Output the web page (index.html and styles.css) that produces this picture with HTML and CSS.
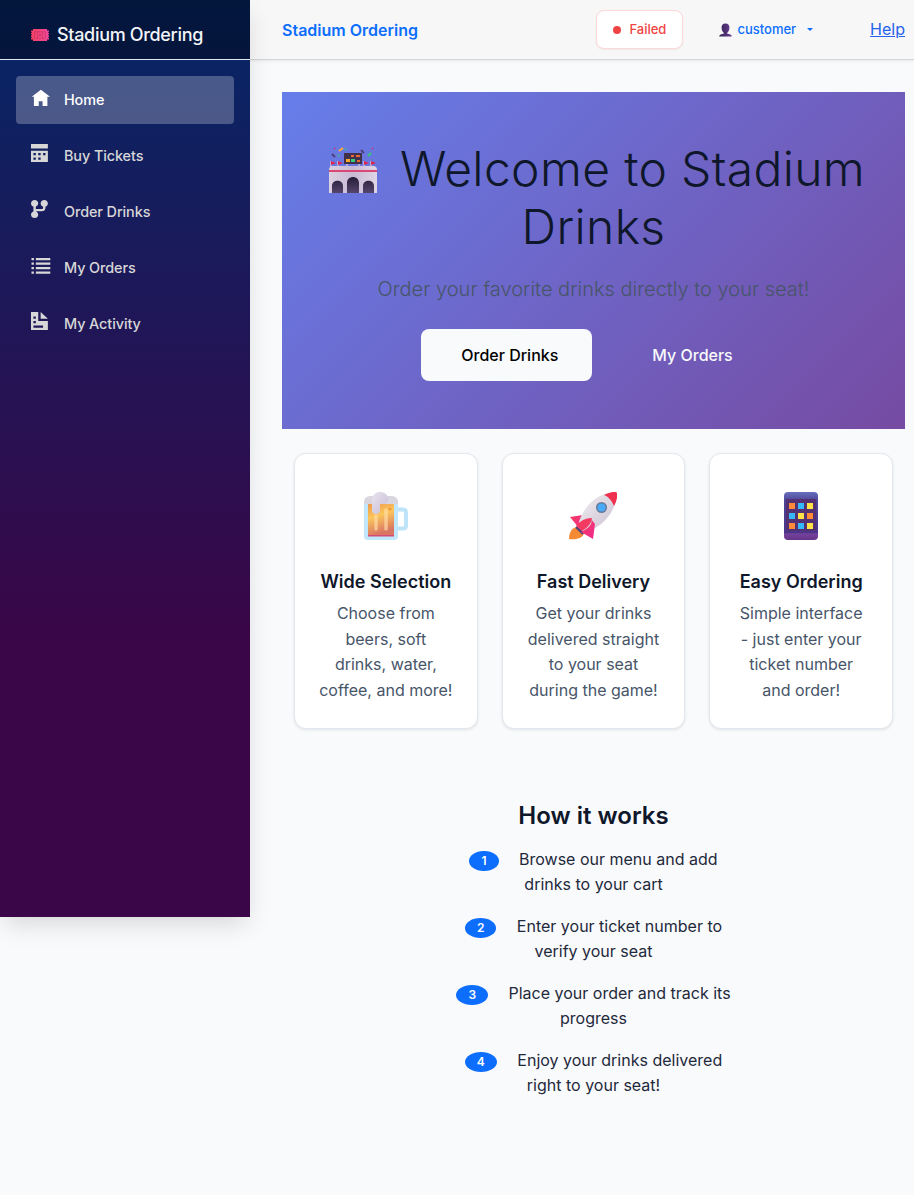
FILE: index.html
```html
<!DOCTYPE html>
<html lang="en">
<head>
<meta charset="utf-8">
<title>Stadium Ordering</title>
<link rel="stylesheet" href="styles.css">
</head>
<body>
<div class="page">
  <aside class="sidebar">
    <div class="brand">
      <svg class="ticket" viewBox="0 0 18 12"><defs><linearGradient id="tk"><stop stop-color="#f5415f"/><stop offset="1" stop-color="#f0479b"/></linearGradient></defs><path d="M2 0h14v1.500h2v1.200h-.7v1.200h.7v1.400h-.7v1.200h.7v1.400h-.7v1.200h.7v1.400h-2V12H2v-1.500H0V9.100h.7V7.900H0V6.500h.7V5.300H0V3.900h.7V2.700H0V1.500h2z" fill="url(#tk)"/><path d="M3.500 2.800h11v6.500h-11zM6.500 3v6M11.500 3v6" fill="none" stroke="#c9356b" stroke-width=".7"/><path d="M8.300 5.200h1.400v1.600H8.300z" fill="#a92d62"/></svg>
      <span>Stadium Ordering</span>
    </div>
    <nav class="nav">
      <a class="nav-link active"><svg class="ico" viewBox="0 0 8 8" preserveAspectRatio="none"><path d="M4.100.8L.3 3.900h.9V8h2V5.900h1.600V8h2V3.900h1.100z"/></svg>Home</a>
      <a class="nav-link"><svg class="ico" viewBox="0 0 8 8" preserveAspectRatio="none"><path d="M0 0v2h7V0zm0 3v5h7V3zm1 1h1v1H1zm2 0h1v1H3zm2 0h1v1H5zM1 6h1v1H1zm2 0h1v1H3z"/></svg>Buy Tickets</a>
      <a class="nav-link"><svg class="ico" viewBox="0 0 8 8" preserveAspectRatio="none"><path d="M1.500 0C.67 0 0 .67 0 1.500c0 .66.41 1.200 1 1.410V5.100c-.59.2-1 .75-1 1.410C0 7.340.67 8 1.500 8S3 7.340 3 6.510c0-.6-.34-1.100-.84-1.340.09-.09.21-.16.34-.16h2c.82 0 1.500-.68 1.500-1.500v-.59c.59-.2 1-.75 1-1.410C7 .67 6.330 0 5.500 0S4 .67 4 1.500c0 .66.41 1.200 1 1.410v.59c0 .28-.22.5-.5.5h-2c-.17 0-.35.04-.5.09V2.900c.59-.2 1-.75 1-1.410C3 .67 2.330 0 1.500 0z"/></svg>Order Drinks</a>
      <a class="nav-link"><svg class="ico" viewBox="0 0 8 8" preserveAspectRatio="none"><path d="M.2.9h1v1h-1zM2 .9h6v1H2zM.2 2.900h1v1h-1zM2 2.900h6v1H2zM.2 4.900h1v1h-1zM2 4.900h6v1H2zM.2 6.900h1v1h-1zM2 6.900h6v1H2z"/></svg>My Orders</a>
      <a class="nav-link"><svg class="ico" viewBox="0 0 8 8" preserveAspectRatio="none"><path d="M0 0v8h7V4H3V0zm4 0v3h3zM1 2h1v1H1zm0 2h1v1H1zm0 2h4v1H1z"/></svg>My Activity</a>
    </nav>
  </aside>
  <div class="main">
    <header class="top">
      <a class="logo">Stadium Ordering</a>
      <div class="status"><i class="dot"></i>Failed</div>
      <div class="user"><svg class="person" viewBox="0 0 13 14"><defs><linearGradient id="pp"><stop stop-color="#352351"/><stop offset="1" stop-color="#673c95"/></linearGradient></defs><path d="M6.500.5C3.700.5 2.400 2.300 2.600 5c.1 2.300 1 4 2.300 4.900v.7L1.700 11.500C.8 11.900.3 12.500.3 13.500h12.400c0-1-.5-1.700-1.400-2L8.100 10.600v-.7C9.400 9 10.300 7.300 10.400 5 10.600 2.300 9.300.5 6.500.5z" fill="url(#pp)"/></svg>customer<i class="caret"></i></div>
      <a class="help">Help</a>
    </header>
    <main class="content">
      <section class="hero">
        <h1><svg class="stadium" viewBox="0 0 48 46"><defs><linearGradient id="st"><stop stop-color="#dbd1df"/><stop offset=".5" stop-color="#c9b9d5"/><stop offset="1" stop-color="#dfd5e5"/></linearGradient><linearGradient id="ar" x2="0" y2="1"><stop stop-color="#251e37"/><stop offset="1" stop-color="#56456d"/></linearGradient></defs><path d="M2 14v7M9 14v7M18 11v9M30 11v9M35 14v7M42 14v7" stroke="#ddd0dd" stroke-width="1.200"/><path d="M2 14l5 2-5 2zM9 14l5 2-5 2zM35 14l5 2-5 2zM42 14l5 2-5 2z" fill="#df2450"/><path d="M15 6h18v11H15z" fill="#41314c"/><path d="M22 8h3v2h-3zM27 8h4v2h-4zM28 13h3v2h-3z" fill="#ec6b35"/><path d="M17 12h4v3h-4z" fill="#ffa82d"/><path d="M22 12h4v3h-4z" fill="#35cf79"/><path d="M10 4l4-3" stroke="#ffab35" stroke-width="2"/><path d="M3 7l3 3M32 3l3 3" stroke="#504078" stroke-width="2"/><path d="M9 9l1-1M39 9l3-3M16 2l1 1" stroke="#36c57a" stroke-width="2"/><path d="M5 1l1 1M43 1l1 1" stroke="#d32c68" stroke-width="1.500"/><path d="M0 23q0-4 4-4h40q4 0 4 4v23H0z" fill="url(#st)"/><path d="M0 23h48v2H0z" fill="#d94874"/><path d="M3 46v-7c0-7 11-7 11 0v7zM18 46V36c0-8 12-8 12 0v10zM34 46v-7c0-7 11-7 11 0v7z" fill="url(#ar)"/></svg>Welcome to Stadium Drinks</h1>
        <p class="lead">Order your favorite drinks directly to your seat!</p>
        <div class="actions"><a class="btn light">Order Drinks</a><a class="btn">My Orders</a></div>
      </section>
      <section class="cards">
        <article class="card">
          <svg class="pic" viewBox="0 0 48 48"><defs><linearGradient id="be" x2=".3" y2="1"><stop stop-color="#ee9a4c"/><stop offset=".45" stop-color="#fbc65c"/><stop offset="1" stop-color="#d97563"/></linearGradient><linearGradient id="fo" x2="1" y2="1"><stop stop-color="#e8e4ec"/><stop offset="1" stop-color="#c8bbd9"/></linearGradient></defs><path d="M35 17.500h6q3 0 3 3v13q0 3-3 3h-6" fill="none" stroke="#bde4f8" stroke-width="4"/><path d="M2 12h34v32q0 4-4 4H6q-4 0-4-4z" fill="#c0e7fb"/><path d="M6 12h26v31H6z" fill="url(#be)"/><path d="M6 43h26v1.500H6z" fill="#d64b76"/><path d="M2 12V9q1-5 7-5h20q6 0 7 5v3z" fill="#d9d6df"/><path d="M10 8c0-11 17-10 16 0 0 3-2 4-5 4h-3v6q0 4-4 4t-4-4z" fill="url(#fo)"/><path d="M14 24v13M24 18v19" stroke="#ffdfaa" stroke-opacity=".65" stroke-width="3.500" stroke-linecap="round"/><circle cx="28" cy="17" r="1.500" fill="#ed963b"/><circle cx="28" cy="32" r="1.200" fill="#ee9145"/></svg>
          <h5>Wide Selection</h5><p>Choose from beers, soft drinks, water, coffee, and more!</p>
        </article>
        <article class="card">
          <svg class="pic" viewBox="0 0 48 48"><defs><linearGradient id="ro" x2="1" y2="1"><stop stop-color="#f2eff3"/><stop offset="1" stop-color="#cabfd0"/></linearGradient><linearGradient id="fi" x2="1" y2="1"><stop stop-color="#f63d5e"/><stop offset="1" stop-color="#f0298f"/></linearGradient></defs><path d="M9 35C3 35 0 40 0 47c8 1 14-1 15-6z" fill="#f58934"/><path d="M14 23L1 25l9 11z" fill="url(#fi)"/><path d="M8 34l7 7" stroke="#4d427e" stroke-width="5"/><path d="M9 34C12 18 24 5 38 1.500l8.500 8.500C43 24 31 36 15 41z" fill="url(#ro)"/><path d="M35 3C41 0 47-1 48 1c1 4-1 9-3 13C43 9 40 5 35 3z" fill="#ef304e"/><path d="M7 34q6-8 16-8-1 8-10 13z" fill="#f33b62"/><path d="M22 27c2 5-2 9-10 13l12 7 2-15z" fill="url(#fi)"/><circle cx="32.500" cy="15.500" r="5.500" fill="#667895"/><circle cx="32.500" cy="15.500" r="4" fill="#4baaf8"/></svg>
          <h5>Fast Delivery</h5><p>Get your drinks delivered straight to your seat during the game!</p>
        </article>
        <article class="card">
          <svg class="pic" viewBox="0 0 48 48"><defs><linearGradient id="ph" x2="0" y2="1"><stop stop-color="#6870bf"/><stop offset=".18" stop-color="#4d4595"/><stop offset=".85" stop-color="#4b358b"/><stop offset=".87" stop-color="#75429c"/><stop offset="1" stop-color="#653487"/></linearGradient></defs><rect x="7" width="34" height="48" rx="4" fill="url(#ph)"/><path d="M9 7h30v32H9z" fill="#543173"/><path d="M12 11h6v6h-6zM30 21h6v6h-6zM12 31h6v6h-6z" fill="#ff8a39"/><path d="M21 11h6v6h-6zM12 21h6v6h-6zM21 31h6v6h-6z" fill="#36b9fa"/><path d="M30 11h6v6h-6zM21 21h6v6h-6zM30 31h6v6h-6z" fill="#ffe347"/></svg>
          <h5>Easy Ordering</h5><p>Simple interface - just enter your ticket number and order!</p>
        </article>
      </section>
      <section class="how">
        <h3>How it works</h3>
        <ul class="steps">
          <li><span class="badge">1</span> Browse our menu and add drinks to your cart</li>
          <li><span class="badge">2</span> Enter your ticket number to verify your seat</li>
          <li><span class="badge">3</span> Place your order and track its progress</li>
          <li><span class="badge">4</span> Enjoy your drinks delivered right to your seat!</li>
        </ul>
      </section>
    </main>
  </div>
</div>
</body>
</html>
```
FILE: styles.css
```css
* { box-sizing: border-box; }
body { margin: 0; background: #f9fafc; color: #1e293b; font: 16px/25.6px Inter, sans-serif; }
h1, h3, h5, p, ul { margin: 0; padding: 0; }
.page { display: flex; align-items: flex-start; min-height: 1195px; }
.sidebar { width: 250px; height: 917px; flex: none; background: linear-gradient(180deg, #052767 0%, #3a0647 70%); box-shadow: 0 10px 24px -4px rgba(0,0,0,.15); z-index: 1; }
.brand { height: 60px; padding: 10px 0 0 31px; display: flex; align-items: center; gap: 8px; color: #f2f4f8; font-size: 18px; font-weight: 500; letter-spacing: -.32px; background: rgba(0,0,0,.4); border-bottom: 1px solid #e2e8f0; }
.ticket { width: 18px; height: 12px; }
.nav { padding: 16px; display: flex; flex-direction: column; gap: 8px; }
.nav-link { height: 48px; display: flex; align-items: center; gap: 13.700px; padding-left: 15px; border-radius: 4px; color: #d7d7d7; font-size: 14.400px; font-weight: 500; letter-spacing: -.08px; }
.nav-link.active { background: rgba(255,255,255,.25); color: #fff; }
.ico { width: 19.300px; height: 18px; margin-bottom: 6px; fill: currentColor; fill-rule: evenodd; overflow: visible; }
.main { flex: 1; min-width: 0; }
.top { height: 60px; background: #f7f7f7; border-bottom: 1px solid #d6d5d5; box-shadow: 0 1px 3px rgba(0,0,0,.08); padding: 0 9px 0 32px; display: flex; align-items: center; }
.logo { color: #0d6efd; font-weight: 600; margin-right: auto; padding-top: 2px; }
.status { width: 87px; height: 39px; display: flex; align-items: center; justify-content: center; gap: 8px; border: 1px solid #fed7d7; border-radius: 8px; background: #fff; color: #ef4444; font-size: 13px; font-weight: 500; box-shadow: 0 1px 2px rgba(0,0,0,.05); }
.dot { width: 8px; height: 8px; border-radius: 50%; background: #ef4444; }
.user { display: flex; align-items: center; margin: 0 57px 0 36px; color: #0d6efd; font-size: 13px; font-weight: 500; }
.person { width: 13px; height: 14px; margin-right: 5px; }
.caret { margin-left: 11px; border: 3px solid transparent; border-top-color: #0d6efd; border-bottom: 0; }
.help { color: #2563eb; text-decoration: underline; }
.content { padding: 32px 9px 0 32px; text-align: center; }
.hero { height: 337px; padding: 48px; background: linear-gradient(135deg, #667eea 0%, #764ba2 100%); }
.hero h1 { font-size: 48px; font-weight: 300; line-height: 57.600px; letter-spacing: .35px; color: #0f172a; margin: 0 -10px 18px; }
.stadium { width: 48px; height: 46px; margin: 0 23px 0 7px; vertical-align: -7px; }
.lead { font-size: 20px; font-weight: 300; line-height: 32px; color: #475569; margin: 0 0 24px; }
.actions { display: flex; justify-content: center; gap: 20px; }
.btn { height: 52px; padding: 0 33.500px 0 40.500px; line-height: 52px; border-radius: 8px; font-weight: 500; color: #f8fafc; }
.btn.light { background: #f8fafc; color: #000; }
.cards { display: grid; grid-template-columns: repeat(3, 1fr); gap: 24px; padding: 24px 12px 0; }
.card { height: 276px; padding: 38px 24px 0; background: #fff; border: 1px solid #e2e8f0; border-radius: 12px; box-shadow: 0 1px 3px rgba(0,0,0,.1); }
.pic { display: block; width: 48px; height: 48px; margin: 0 auto 31px; }
.card h5 { font-size: 18px; line-height: 22px; font-weight: 600; color: #0f172a; margin: 0 -10px 8px; }
.card p { color: #475569; }
.how { padding-top: 72px; }
.how h3 { font-size: 24px; line-height: 29px; font-weight: 600; color: #0f172a; margin-bottom: 16.600px; }
.steps { width: 288px; margin: 0 auto; list-style: none; }
.steps li { margin-bottom: 15.800px; }
.badge { display: inline-block; margin-right: 16px; padding: 4px 12px; border-radius: 50%; background: #0d6efd; color: #fff; font-size: 12px; line-height: 12px; font-weight: 600; vertical-align: baseline; }
```
